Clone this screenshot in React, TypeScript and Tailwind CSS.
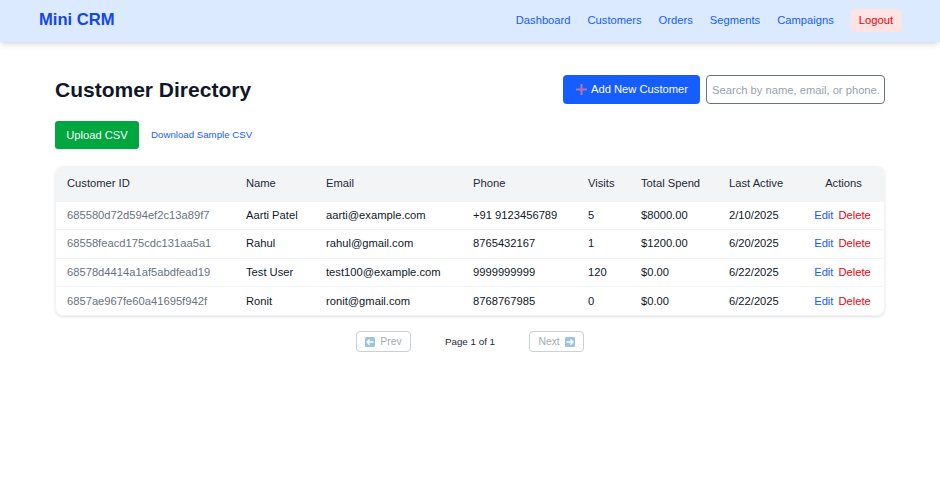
import React from "react"

type Customer = {
    id: string
    name: string
    email: string
    phone: string
    visits: number
    spend: string
    lastActive: string
}

const customers: Customer[] = [
    { id: "685580d72d594ef2c13a89f7", name: "Aarti Patel", email: "aarti@example.com", phone: "+91 9123456789", visits: 5, spend: "$8000.00", lastActive: "2/10/2025" },
    { id: "68558feacd175cdc131aa5a1", name: "Rahul", email: "rahul@gmail.com", phone: "8765432167", visits: 1, spend: "$1200.00", lastActive: "6/20/2025" },
    { id: "68578d4414a1af5abdfead19", name: "Test User", email: "test100@example.com", phone: "9999999999", visits: 120, spend: "$0.00", lastActive: "6/22/2025" },
    { id: "6857ae967fe60a41695f942f", name: "Ronit", email: "ronit@gmail.com", phone: "8768767985", visits: 0, spend: "$0.00", lastActive: "6/22/2025" },
]

const navLinks = ["Dashboard", "Customers", "Orders", "Segments", "Campaigns"]

function ArrowBox({ dir }: { dir: "left" | "right" }) {
    return (
        <svg width="10" height="10" viewBox="0 0 10 10">
            <rect x="0" y="0" width="10" height="10" rx="1.5" fill="#3b88c3" />
            {dir === "left" ? (
                <path d="M2 5h6M2 5l2.2-2.2M2 5l2.2 2.2" stroke="#fff" strokeWidth="1.4" fill="none" strokeLinecap="round" />
            ) : (
                <path d="M8 5H2M8 5L5.8 2.8M8 5L5.8 7.2" stroke="#fff" strokeWidth="1.4" fill="none" strokeLinecap="round" />
            )}
        </svg>
    )
}

export default function App() {
    return (
        <div className="min-h-screen bg-white font-['Liberation_Sans',Arial,sans-serif] text-[11.2px]">
            {/* Navbar */}
            <nav className="h-[42px] bg-blue-100 shadow-md flex items-center justify-between px-[39px] pb-[2px]">
                <span className="text-[16.6px] font-bold text-blue-700">Mini CRM</span>
                <div className="flex items-center gap-[17px]">
                    {navLinks.map((l) => (
                        <a key={l} className="text-blue-600 cursor-pointer">{l}</a>
                    ))}
                    <button className="h-[23px] px-[8px] rounded bg-red-100 text-red-600">Logout</button>
                </div>
            </nav>

            <div className="w-[830px] mx-auto pt-[33px]">
                {/* Header row */}
                <div className="flex items-center justify-between h-[29px]">
                    <h1 className="text-[21px] font-bold text-gray-900 mt-[1px]">Customer Directory</h1>
                    <div className="flex items-center gap-[6px]">
                        <button className="h-[29px] w-[137px] rounded bg-blue-600 text-white flex items-center justify-center gap-[3px]">
                            <svg width="13" height="13" viewBox="0 0 13 13">
                                <path d="M6.5 1v11M1 6.5h11" stroke="#b873b8" strokeWidth="2" />
                            </svg>
                            Add New Customer
                        </button>
                        <input
                            placeholder="Search by name, email, or phone..."
                            className="h-[29px] w-[179px] rounded border border-gray-500 px-[5px] text-[11.2px] placeholder:text-gray-400 outline-none"
                        />
                    </div>
                </div>

                {/* Upload row */}
                <div className="flex items-center gap-[12px] mt-[17px]">
                    <button className="h-[28px] w-[84px] rounded-[3px] bg-green-600 text-white">Upload CSV</button>
                    <a className="text-[9.7px] text-blue-600 cursor-pointer mt-[1px]">Download Sample CSV</a>
                </div>

                {/* Table */}
                <div className="mt-[17px] rounded-lg shadow-sm border border-gray-100 overflow-hidden">
                    <table className="w-full table-fixed border-collapse text-left">
                        <colgroup>
                            <col className="w-[179px]" />
                            <col className="w-[80px]" />
                            <col className="w-[147px]" />
                            <col className="w-[115px]" />
                            <col className="w-[53px]" />
                            <col className="w-[88px]" />
                            <col className="w-[83px]" />
                            <col className="w-[85px]" />
                        </colgroup>
                        <thead>
                            <tr className="h-[34px] bg-gray-100 text-gray-800">
                                <th className="font-normal pl-[11px]">Customer ID</th>
                                <th className="font-normal pl-[11px]">Name</th>
                                <th className="font-normal pl-[11px]">Email</th>
                                <th className="font-normal pl-[11px]">Phone</th>
                                <th className="font-normal pl-[11px]">Visits</th>
                                <th className="font-normal pl-[11px]">Total Spend</th>
                                <th className="font-normal pl-[11px]">Last Active</th>
                                <th className="font-normal text-center">Actions</th>
                            </tr>
                        </thead>
                        <tbody>
                            {customers.map((c) => (
                                <tr key={c.id} className="h-[28.6px] border-t border-gray-100 text-gray-900">
                                    <td className="pl-[11px] text-gray-500">{c.id}</td>
                                    <td className="pl-[11px]">{c.name}</td>
                                    <td className="pl-[11px]">{c.email}</td>
                                    <td className="pl-[11px]">{c.phone}</td>
                                    <td className="pl-[11px]">{c.visits}</td>
                                    <td className="pl-[11px]">{c.spend}</td>
                                    <td className="pl-[11px]">{c.lastActive}</td>
                                    <td className="text-center pr-[2px]">
                                        <span className="text-blue-600 mr-[5px]">Edit</span>
                                        <span className="text-red-600">Delete</span>
                                    </td>
                                </tr>
                            ))}
                        </tbody>
                    </table>
                </div>

                {/* Pagination */}
                <div className="flex items-center justify-center gap-[34px] mt-[15px]">
                    <button disabled className="h-[21px] w-[55px] rounded border border-gray-400 opacity-50 flex items-center justify-center gap-[5px] text-gray-600 text-[10.4px]">
                        <ArrowBox dir="left" />
                        Prev
                    </button>
                    <span className="text-gray-800 text-[9.8px]">Page 1 of 1</span>
                    <button disabled className="h-[21px] w-[55px] rounded border border-gray-400 opacity-50 flex items-center justify-center gap-[5px] text-gray-600 text-[10.4px]">
                        Next
                        <ArrowBox dir="right" />
                    </button>
                </div>
            </div>
        </div>
    )
}
